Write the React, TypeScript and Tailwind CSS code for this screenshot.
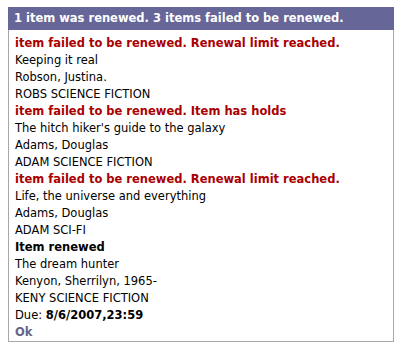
export default function App() {
  const lines: { t: React.ReactNode; k: "red" | "norm" | "bold" | "ok" }[] = [
    { t: "item failed to be renewed. Renewal limit reached.", k: "red" },
    { t: "Keeping it real", k: "norm" },
    { t: "Robson, Justina.", k: "norm" },
    { t: "ROBS SCIENCE FICTION", k: "norm" },
    { t: "item failed to be renewed. Item has holds", k: "red" },
    { t: "The hitch hiker's guide to the galaxy", k: "norm" },
    { t: "Adams, Douglas", k: "norm" },
    { t: "ADAM SCIENCE FICTION", k: "norm" },
    { t: "item failed to be renewed. Renewal limit reached.", k: "red" },
    { t: "Life, the universe and everything", k: "norm" },
    { t: "Adams, Douglas", k: "norm" },
    { t: "ADAM SCI-FI", k: "norm" },
    { t: "Item renewed", k: "bold" },
    { t: "The dream hunter", k: "norm" },
    { t: "Kenyon, Sherrilyn, 1965-", k: "norm" },
    { t: "KENY SCIENCE FICTION", k: "norm" },
    {
      t: (
        <>
          Due: <span className="font-bold">8/6/2007,23:59</span>
        </>
      ),
      k: "norm",
    },
    { t: "Ok", k: "ok" },
  ];
  const cls = {
    red: "font-bold text-[#aa0000]",
    norm: "text-black",
    bold: "font-bold text-black",
    ok: "font-bold text-[#666688]",
  };
  return (
    <div className="bg-white w-[401px] h-[349px] pt-[7px] pl-[8px] font-['DejaVu_Sans',Verdana,sans-serif] text-[11.5px]">
      <div className="w-[386px] h-[335px] border border-[#a8a8a8] border-t-0">
        <div className="bg-[#666699] text-white font-bold h-[23px] flex items-center pl-[6px] -mx-px w-[386px]">
          1 item was renewed. 3 items failed to be renewed.
        </div>
        <div className="pt-[5px] pl-[6px] leading-[17px]">
          {lines.map((l, i) => (
            <div key={i} className={cls[l.k]}>
              {l.t}
            </div>
          ))}
        </div>
      </div>
    </div>
  );
}
